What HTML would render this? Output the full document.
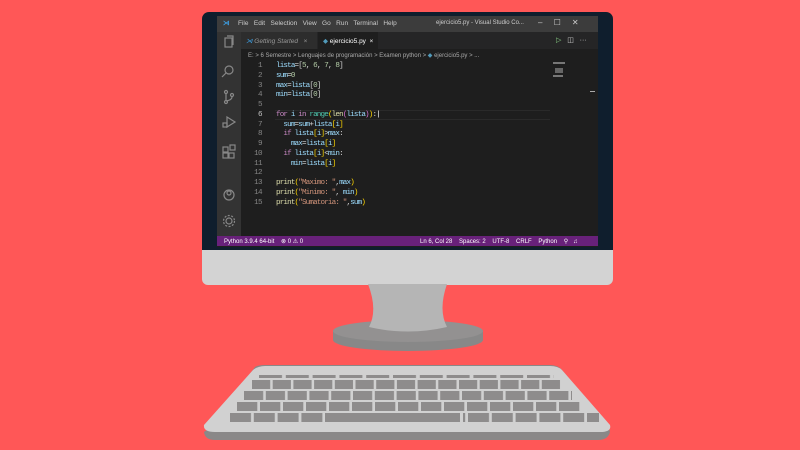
<!DOCTYPE html><html><head><style>
*{margin:0;padding:0;box-sizing:border-box}
body{width:800px;height:450px;background:#ff5757;position:relative;overflow:hidden;font-family:"Liberation Sans",sans-serif}
.abs{position:absolute}
.mono{font-family:"Liberation Mono",monospace;font-size:7.6px;white-space:pre}
.ui{font-size:6.5px;color:#ccc;white-space:nowrap}
</style></head><body>
<div class="abs" style="left:202px;top:12px;width:411px;height:250px;background:#0f1e2d;border-radius:7px 7px 0 0"></div>
<div class="abs" style="left:202px;top:250px;width:411px;height:35px;background:#d3d3d3;border-radius:0 0 6px 6px"></div>
<div class="abs" style="left:217px;top:16px;width:381px;height:231px;background:#1e1e1e"></div>
<div class="abs" style="left:217px;top:16px;width:381px;height:16px;background:#3c3c3c"></div>
<div class="abs ui" style="left:223px;top:19px;color:#3c9de0;font-weight:bold">⋊</div>
<div class="abs ui" style="left:238px;top:20px;color:#ccc">File&nbsp;&nbsp; Edit&nbsp;&nbsp; Selection&nbsp;&nbsp; View&nbsp;&nbsp; Go&nbsp;&nbsp; Run&nbsp;&nbsp; Terminal&nbsp;&nbsp; Help</div>
<div class="abs ui" style="left:436px;top:20px;font-size:6px">ejercicio5.py - Visual Studio Co...</div>
<div class="abs ui" style="left:538px;top:18px;font-size:8px">–&nbsp;&nbsp;&nbsp;&nbsp; ☐&nbsp;&nbsp;&nbsp;&nbsp; ✕</div>
<div class="abs" style="left:217px;top:32px;width:24px;height:204px;background:#333"></div>
<svg class="abs" style="left:217px;top:32px" width="24" height="204" fill="none" stroke="#888" stroke-width="1.2">
<rect x="8" y="6" width="7" height="9"/><path d="M10 4h6v9"/>
<circle cx="12" cy="38" r="4"/><path d="M9 41l-4 4"/>
<circle cx="9" cy="60" r="1.5"/><circle cx="9" cy="70" r="1.5"/><circle cx="15" cy="63" r="1.5"/><path d="M9 62v6M15 65q0 3-6 4"/>
<path d="M10 85l8 5-8 5z"/><rect x="6" y="91" width="4" height="4"/>
<rect x="6" y="115" width="5" height="5"/><rect x="6" y="121" width="5" height="5"/><rect x="12" y="121" width="5" height="5"/><rect x="13" y="113" width="5" height="5"/>
<circle cx="12" cy="163" r="5"/><circle cx="12" cy="161" r="2"/>
<circle cx="12" cy="189" r="3"/><circle cx="12" cy="189" r="5.5" stroke-dasharray="2 1.5"/>
</svg>
<div class="abs" style="left:241px;top:32px;width:357px;height:17px;background:#252526"></div>
<div class="abs" style="left:241px;top:32px;width:76px;height:17px;background:#2d2d2d"></div>
<div class="abs ui" style="left:246px;top:37px;font-style:italic;color:#999"><span style="color:#3c9de0">⋊</span> Getting Started&nbsp;&nbsp; ×</div>
<div class="abs" style="left:318px;top:32px;width:60px;height:17px;background:#1e1e1e"></div>
<div class="abs ui" style="left:323px;top:37px;color:#fff"><span style="color:#519aba">◆</span> ejercicio5.py&nbsp; ×</div>
<div class="abs ui" style="left:556px;top:36px;font-size:7px"><span style="color:#89d185">▷</span>&nbsp;&nbsp; ◫&nbsp;&nbsp; ···</div>
<div class="abs ui" style="left:248px;top:52px;font-size:6px;color:#aaa">E: &gt; 6 Semestre &gt; Lenguajes de programación &gt; Examen python &gt; <span style="color:#519aba">◆</span> ejercicio5.py &gt; ...</div>
<div class="abs" style="left:553px;top:62px;width:12px;height:2px;background:#777"></div>
<div class="abs" style="left:555px;top:68px;width:8px;height:5px;background:#666"></div>
<div class="abs" style="left:553px;top:75px;width:10px;height:2px;background:#777"></div>
<div class="abs" style="left:590px;top:91px;width:5px;height:1px;background:#aaa"></div>
<div class="abs" style="left:275px;top:110px;width:275px;height:10px;border-top:1px solid #2a2a2a;border-bottom:1px solid #2a2a2a"></div>
<div class="abs mono" style="left:252px;top:62px;line-height:9.75px;color:#858585;text-align:right;width:10px;letter-spacing:-0.6px">1
2
3
4
5
<span style="color:#c6c6c6">6</span>
7
8
9
10
11
12
13
14
15</div>
<div class="abs mono" style="left:276px;top:62px;line-height:9.75px;color:#9cdcfe;letter-spacing:-0.85px"><span style="color:#9cdcfe">lista</span><span style="color:#d4d4d4">=[</span><span style="color:#b5cea8">5</span><span style="color:#d4d4d4">, </span><span style="color:#b5cea8">6</span><span style="color:#d4d4d4">, </span><span style="color:#b5cea8">7</span><span style="color:#d4d4d4">, </span><span style="color:#b5cea8">8</span><span style="color:#d4d4d4">]</span>
sum<span style="color:#d4d4d4">=</span><span style="color:#b5cea8">0</span>
max<span style="color:#d4d4d4">=</span>lista<span style="color:#d4d4d4">[</span><span style="color:#b5cea8">0</span><span style="color:#d4d4d4">]</span>
min<span style="color:#d4d4d4">=</span>lista<span style="color:#d4d4d4">[</span><span style="color:#b5cea8">0</span><span style="color:#d4d4d4">]</span>

<span style="color:#c586c0">for</span> i <span style="color:#c586c0">in</span> <span style="color:#4ec9b0">range</span><span style="color:#ffd700">(</span><span style="color:#dcdcaa">len</span><span style="color:#da70d6">(</span>lista<span style="color:#da70d6">)</span><span style="color:#ffd700">)</span><span style="color:#d4d4d4">:</span><span style="color:#fff">|</span>
  sum<span style="color:#d4d4d4">=</span>sum<span style="color:#d4d4d4">+</span>lista<span style="color:#ffd700">[</span>i<span style="color:#ffd700">]</span>
  <span style="color:#c586c0">if</span> lista<span style="color:#ffd700">[</span>i<span style="color:#ffd700">]</span><span style="color:#d4d4d4">&gt;</span>max<span style="color:#d4d4d4">:</span>
    max<span style="color:#d4d4d4">=</span>lista<span style="color:#ffd700">[</span>i<span style="color:#ffd700">]</span>
  <span style="color:#c586c0">if</span> lista<span style="color:#ffd700">[</span>i<span style="color:#ffd700">]</span><span style="color:#d4d4d4">&lt;</span>min<span style="color:#d4d4d4">:</span>
    min<span style="color:#d4d4d4">=</span>lista<span style="color:#ffd700">[</span>i<span style="color:#ffd700">]</span>

<span style="color:#dcdcaa">print</span><span style="color:#ffd700">(</span><span style="color:#ce9178">"Maximo: "</span><span style="color:#d4d4d4">,</span>max<span style="color:#ffd700">)</span>
<span style="color:#dcdcaa">print</span><span style="color:#ffd700">(</span><span style="color:#ce9178">"Minimo: "</span><span style="color:#d4d4d4">, </span>min<span style="color:#ffd700">)</span>
<span style="color:#dcdcaa">print</span><span style="color:#ffd700">(</span><span style="color:#ce9178">"Sumatoria: "</span><span style="color:#d4d4d4">,</span>sum<span style="color:#ffd700">)</span></div>
<div class="abs" style="left:217px;top:236px;width:381px;height:10px;background:#68217a"></div>
<div class="abs ui" style="left:224px;top:238px;font-size:6px;color:#fff">Python 3.9.4 64-bit&nbsp;&nbsp;&nbsp; ⊗ 0 ⚠ 0</div>
<div class="abs ui" style="left:420px;top:238px;font-size:6px;color:#fff">Ln 6, Col 28&nbsp;&nbsp;&nbsp; Spaces: 2&nbsp;&nbsp;&nbsp; UTF-8&nbsp;&nbsp;&nbsp; CRLF&nbsp;&nbsp;&nbsp; Python&nbsp;&nbsp;&nbsp; ⚲&nbsp;&nbsp; ♫</div>
<svg class="abs" style="left:0;top:0" width="800" height="450">
<defs>
<pattern id="p1" patternUnits="userSpaceOnUse" x="252" y="0" width="20.7" height="10"><rect width="18.2" height="10" fill="#8e8c8c"/></pattern>
<pattern id="p2" patternUnits="userSpaceOnUse" x="244" y="0" width="21.8" height="10"><rect width="19.2" height="10" fill="#8e8c8c"/></pattern>
<pattern id="p3" patternUnits="userSpaceOnUse" x="237" y="0" width="23" height="10"><rect width="20.3" height="10" fill="#8e8c8c"/></pattern>
<pattern id="p4" patternUnits="userSpaceOnUse" x="230" y="0" width="23.8" height="10"><rect width="21" height="10" fill="#8e8c8c"/></pattern>
<pattern id="p0" patternUnits="userSpaceOnUse" x="259" y="0" width="26.8" height="10"><rect width="23" height="10" fill="#8e8c8c"/></pattern>
</defs>
<ellipse cx="408" cy="340" rx="75" ry="11" fill="#888"/>
<rect x="333" y="330" width="150" height="10" fill="#888"/>
<ellipse cx="408" cy="331" rx="75" ry="11" fill="#939191"/>
<path d="M368 284 Q378 310 369 327 Q408 336 447 327 Q438 310 447 284Z" fill="#b5b5b5"/>
<path d="M210 428 L255 367 Q258 365 265 365 L550 365 Q558 365 562 370 L608 425 L610 432 Q608 440 598 440 L215 440 Q205 440 204 432Z" fill="#8a8888"/>
<path d="M204 425 L253 370 Q258 366 265 366 L550 366 Q558 366 562 370 L610 425 Q612 432 600 432 L215 432 Q203 432 204 425Z" fill="#d1d1d1"/>
<rect x="259" y="375" width="295" height="3" fill="url(#p0)"/>
<rect x="252" y="380" width="310" height="9" fill="url(#p1)"/>
<rect x="244" y="391" width="328" height="9" fill="url(#p2)"/>
<rect x="237" y="402" width="345" height="9" fill="url(#p3)"/>
<rect x="230" y="413" width="95" height="9" fill="url(#p4)"/>
<rect x="325" y="413" width="135" height="9" fill="#8e8c8c"/>
<rect x="463" y="413" width="136" height="9" fill="url(#p4)"/>
</svg>
</body></html>
